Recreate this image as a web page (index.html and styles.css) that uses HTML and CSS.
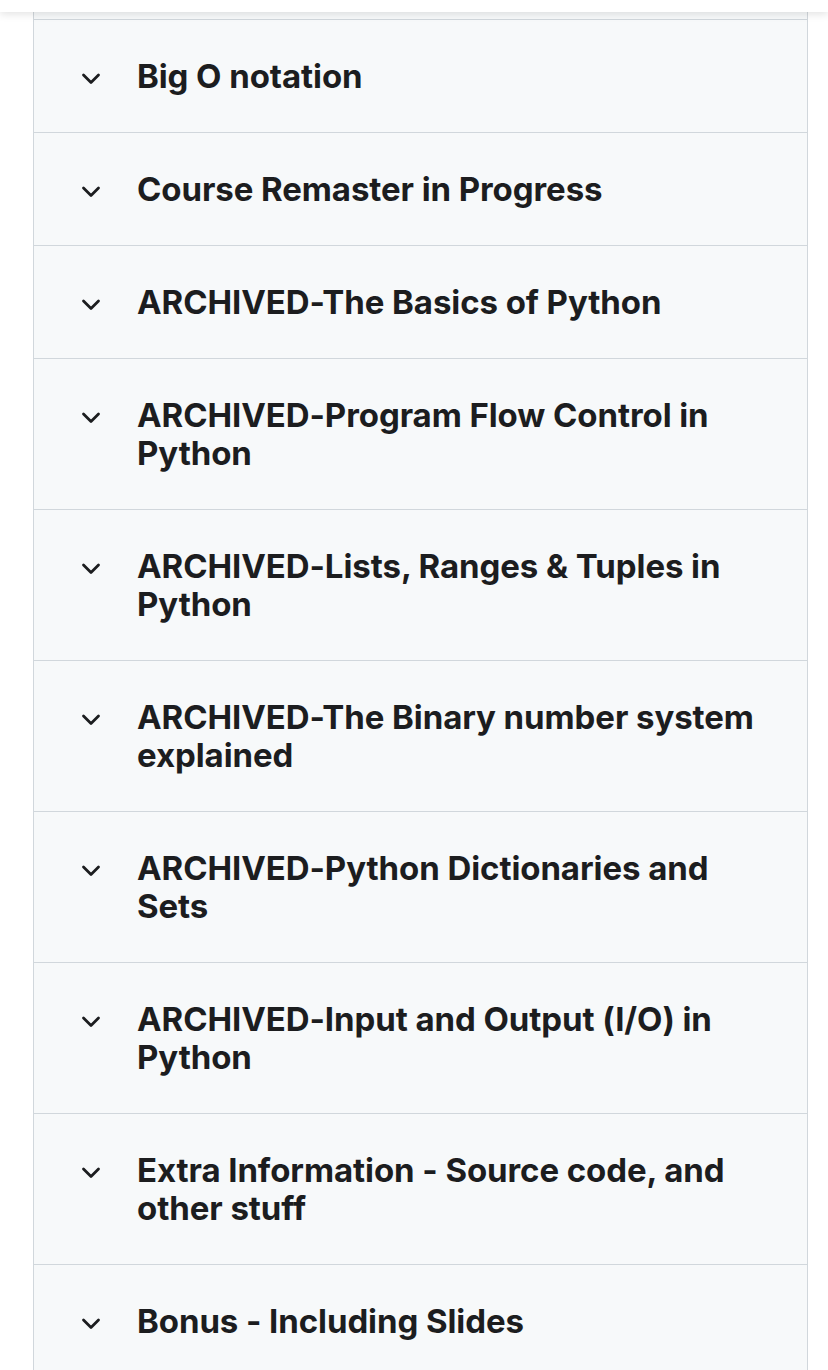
FILE: index.html
```html
<!DOCTYPE html>
<html>
<head>
<meta charset="utf-8">
<link rel="stylesheet" href="styles.css">
</head>
<body>
<div class="topbar"></div>
<div class="page">
  <div class="card">
    <div class="tail"></div>
    <div class="row"><span class="chev"><svg viewBox="0 0 20 12" width="20" height="12"><path d="M2.5 2 L10 9.5 L17.5 2" fill="none" stroke="#1c1d1f" stroke-width="2.8" stroke-linecap="round" stroke-linejoin="round"/></svg></span><span class="title">Big O notation</span></div>
    <div class="row"><span class="chev"><svg viewBox="0 0 20 12" width="20" height="12"><path d="M2.5 2 L10 9.5 L17.5 2" fill="none" stroke="#1c1d1f" stroke-width="2.8" stroke-linecap="round" stroke-linejoin="round"/></svg></span><span class="title">Course Remaster in Progress</span></div>
    <div class="row"><span class="chev"><svg viewBox="0 0 20 12" width="20" height="12"><path d="M2.5 2 L10 9.5 L17.5 2" fill="none" stroke="#1c1d1f" stroke-width="2.8" stroke-linecap="round" stroke-linejoin="round"/></svg></span><span class="title">ARCHIVED-The Basics of Python</span></div>
    <div class="row"><span class="chev"><svg viewBox="0 0 20 12" width="20" height="12"><path d="M2.5 2 L10 9.5 L17.5 2" fill="none" stroke="#1c1d1f" stroke-width="2.8" stroke-linecap="round" stroke-linejoin="round"/></svg></span><span class="title">ARCHIVED-Program Flow Control in Python</span></div>
    <div class="row"><span class="chev"><svg viewBox="0 0 20 12" width="20" height="12"><path d="M2.5 2 L10 9.5 L17.5 2" fill="none" stroke="#1c1d1f" stroke-width="2.8" stroke-linecap="round" stroke-linejoin="round"/></svg></span><span class="title">ARCHIVED-Lists, Ranges &amp; Tuples in Python</span></div>
    <div class="row"><span class="chev"><svg viewBox="0 0 20 12" width="20" height="12"><path d="M2.5 2 L10 9.5 L17.5 2" fill="none" stroke="#1c1d1f" stroke-width="2.8" stroke-linecap="round" stroke-linejoin="round"/></svg></span><span class="title">ARCHIVED-The Binary number system explained</span></div>
    <div class="row"><span class="chev"><svg viewBox="0 0 20 12" width="20" height="12"><path d="M2.5 2 L10 9.5 L17.5 2" fill="none" stroke="#1c1d1f" stroke-width="2.8" stroke-linecap="round" stroke-linejoin="round"/></svg></span><span class="title">ARCHIVED-Python Dictionaries and Sets</span></div>
    <div class="row"><span class="chev"><svg viewBox="0 0 20 12" width="20" height="12"><path d="M2.5 2 L10 9.5 L17.5 2" fill="none" stroke="#1c1d1f" stroke-width="2.8" stroke-linecap="round" stroke-linejoin="round"/></svg></span><span class="title">ARCHIVED-Input and Output (I/O) in Python</span></div>
    <div class="row"><span class="chev"><svg viewBox="0 0 20 12" width="20" height="12"><path d="M2.5 2 L10 9.5 L17.5 2" fill="none" stroke="#1c1d1f" stroke-width="2.8" stroke-linecap="round" stroke-linejoin="round"/></svg></span><span class="title">Extra Information - Source code, and other stuff</span></div>
    <div class="row last"><span class="chev"><svg viewBox="0 0 20 12" width="20" height="12"><path d="M2.5 2 L10 9.5 L17.5 2" fill="none" stroke="#1c1d1f" stroke-width="2.8" stroke-linecap="round" stroke-linejoin="round"/></svg></span><span class="title">Bonus - Including Slides</span></div>
  </div>
</div>
</body>
</html>
```

FILE: styles.css
```css
html, body {
  margin: 0;
  padding: 0;
  background: #ffffff;
}
body {
  font-family: Inter, "Liberation Sans", sans-serif;
  color: #1c1d1f;
  overflow: hidden;
  height: 1370px;
  display: flex;
  flex-direction: column;
}
.topbar {
  position: relative;
  z-index: 2;
  flex-shrink: 0;
  height: 12px;
  background: #ffffff;
  box-shadow: 0 2px 8px rgba(0, 0, 0, 0.12);
}
.page {
  flex: 1;
  display: flex;
  flex-direction: column;
  padding: 0 20px 0 33px;
}
.card {
  flex: 1;
  background: #f7f9fa;
  border-left: 1px solid #d1d7dc;
  border-right: 1px solid #d1d7dc;
}
.tail {
  height: 7px;
  border-bottom: 1px solid #d1d7dc;
}
.row {
  display: flex;
  align-items: flex-start;
  padding: 37px 40px 37px 47px;
  border-bottom: 1px solid #d1d7dc;
}
.row.last {
  border-bottom: none;
}
.chev {
  width: 20px;
  height: 38px;
  display: flex;
  align-items: center;
  padding-top: 5px;
  box-sizing: border-box;
  margin-right: 36px;
  flex-shrink: 0;
}
.chev svg {
  display: block;
}
.title {
  font-size: 33px;
  line-height: 38px;
  font-weight: 700;
  letter-spacing: -0.08px;
}
```
